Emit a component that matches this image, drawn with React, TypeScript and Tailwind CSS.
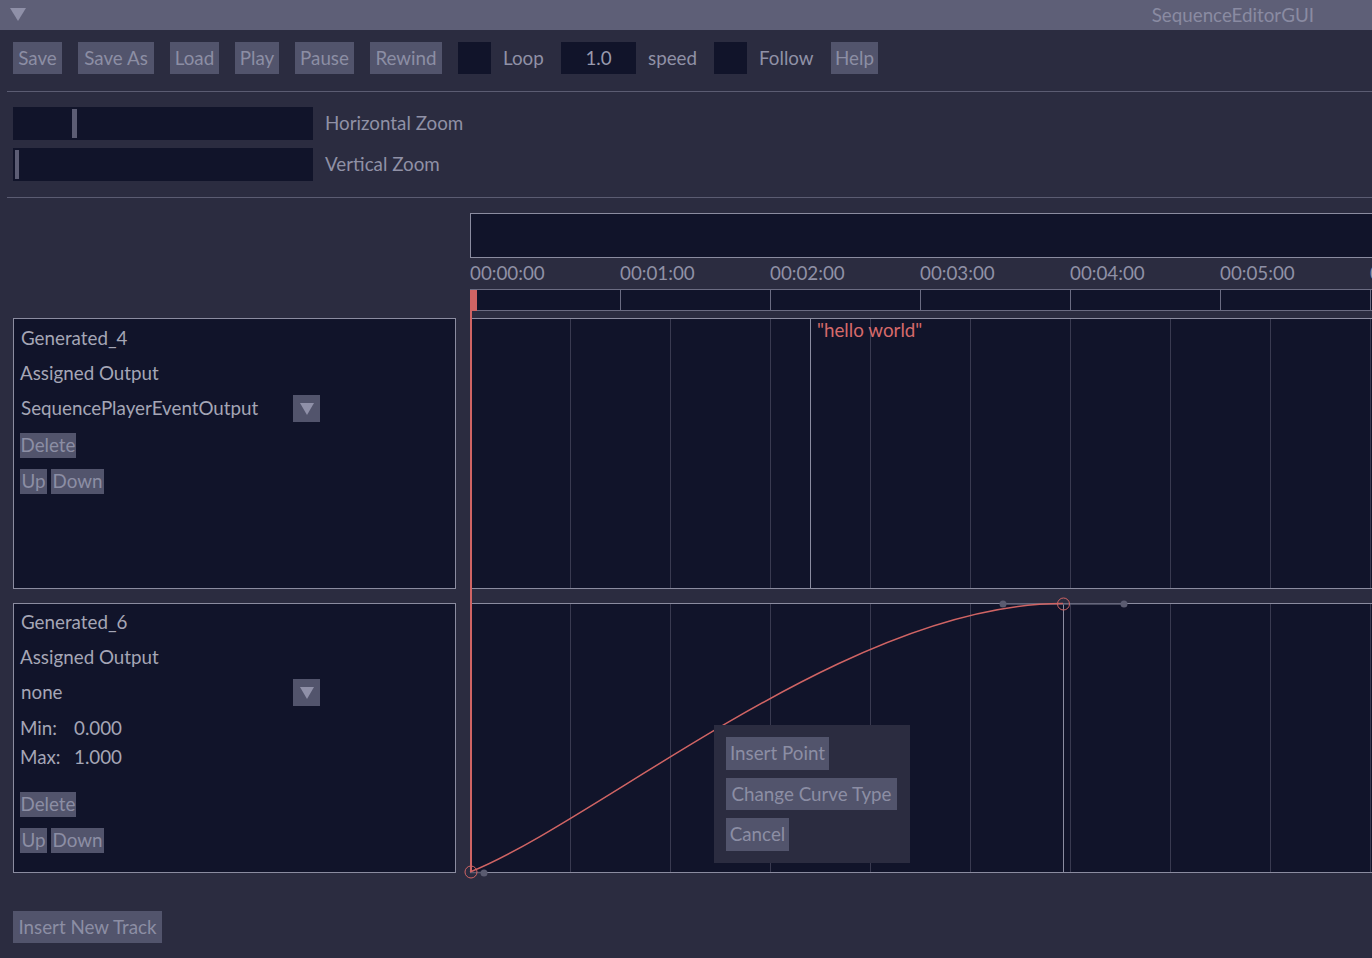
import React from "react";

const RED = "#d06464";
const LIGHT = "#8b8ca0";
const GRID = "#393a50";
const DARK = "#11142a";

function ToolBtn({ children, w, className = "" }: { children: React.ReactNode; w: string; className?: string }) {
  return (
    <div className={`h-[32px] ${w} bg-[#52546c] text-[#8c8ea4] flex items-center justify-center whitespace-nowrap shrink-0 ${className}`}>
      {children}
    </div>
  );
}

function SmallBtn({ children, w, className = "" }: { children: React.ReactNode; w: string; className?: string }) {
  return (
    <div className={`h-[25px] ${w} bg-[#52546c] text-[#8c8ea4] flex items-center justify-center whitespace-nowrap shrink-0 ${className}`}>
      {children}
    </div>
  );
}

function Check({ className = "" }: { className?: string }) {
  return <div className={`h-[32px] w-[33px] bg-[#11142a] shrink-0 ${className}`} />;
}

function DropArrow() {
  return (
    <div className="w-[27px] h-[27px] bg-[#52546c] flex items-center justify-center shrink-0">
      <svg width="16" height="14" viewBox="0 0 16 14">
        <polygon points="1,1 15,1 8,13" fill="#8f90a8" />
      </svg>
    </div>
  );
}

function Grid({ h }: { h: number }) {
  const xs = [100, 200, 300, 400, 500, 600, 700, 800, 900];
  return (
    <>
      <rect x="0" y="0" width="902" height={h} fill={DARK} />
      {xs.map((x) => (
        <line key={x} x1={x + 0.5} y1="0" x2={x + 0.5} y2={h} stroke={GRID} strokeWidth="1" />
      ))}
    </>
  );
}

export default function App() {
  const labels = ["00:00:00", "00:01:00", "00:02:00", "00:03:00", "00:04:00", "00:05:00", "00:06:00"];
  return (
    <div className="relative w-[1372px] h-[958px] overflow-hidden bg-[#2b2c40] font-[family-name:Lato,'Noto_Sans',sans-serif] text-[18.8px] leading-none text-[#9091a6]">
      {/* title bar */}
      <div className="h-[30px] bg-[#5e5f77] flex items-center justify-between pl-[10px] pr-[58px]">
        <svg width="16" height="14" viewBox="0 0 16 14">
          <polygon points="0,0 16,0 8,13" fill="#8f90a8" />
        </svg>
        <span className="text-[#8a8ba2]">SequenceEditorGUI</span>
      </div>

      {/* toolbar */}
      <div className="flex items-center h-[32px] mt-[12px] pl-[13px]">
        <ToolBtn w="w-[49px]">Save</ToolBtn>
        <ToolBtn w="w-[76px]" className="ml-[16px]">Save As</ToolBtn>
        <ToolBtn w="w-[49px]" className="ml-[16px]">Load</ToolBtn>
        <ToolBtn w="w-[44px]" className="ml-[16px]">Play</ToolBtn>
        <ToolBtn w="w-[59px]" className="ml-[16px]">Pause</ToolBtn>
        <ToolBtn w="w-[72px]" className="ml-[16px]">Rewind</ToolBtn>
        <Check className="ml-[16px]" />
        <span className="ml-[12px] w-[46px] shrink-0">Loop</span>
        <div className="ml-[12px] w-[75px] h-[32px] bg-[#11142a] text-[#9899ad] flex items-center justify-center shrink-0">1.0</div>
        <span className="ml-[12px] w-[54px] shrink-0">speed</span>
        <Check className="ml-[12px]" />
        <span className="ml-[12px] w-[60px] shrink-0">Follow</span>
        <ToolBtn w="w-[47px]" className="ml-[12px]">Help</ToolBtn>
      </div>

      <div className="mt-[17px] ml-[7px] h-px bg-[#5b5c72]" />

      {/* zoom sliders */}
      <div className="pl-[13px] pt-[15px] flex flex-col gap-[8px]">
        <div className="flex items-center">
          <div className="w-[300px] h-[33px] bg-[#11142a] flex items-center pl-[59px] shrink-0">
            <div className="w-[5px] h-[29px] bg-[#5c5d74]" />
          </div>
          <span className="ml-[12px]">Horizontal Zoom</span>
        </div>
        <div className="flex items-center">
          <div className="w-[300px] h-[33px] bg-[#11142a] flex items-center pl-[2px] shrink-0">
            <div className="w-[4px] h-[29px] bg-[#5c5d74]" />
          </div>
          <span className="ml-[12px]">Vertical Zoom</span>
        </div>
      </div>

      <div className="mt-[16px] ml-[7px] h-px bg-[#5b5c72]" />

      {/* timeline */}
      <div className="flex pl-[13px] mt-[15px]">
        {/* left column: track headers */}
        <div className="w-[443px] shrink-0 flex flex-col text-[#a5a6b6]">
          <div className="h-[105px]" />
          {/* track 1 */}
          <div className="h-[271px] border border-[#8b8ca0] bg-[#11142a] pl-[6px] pt-[2px] flex flex-col">
            <div className="h-[35px] flex items-center pl-[1px]">Generated_4</div>
            <div className="h-[35px] flex items-center">Assigned Output</div>
            <div className="h-[35px] flex items-center">
              <span className="w-[273px] pl-[1px] shrink-0">SequencePlayerEventOutput</span>
              <DropArrow />
            </div>
            <SmallBtn w="w-[56px]" className="mt-[7px]">Delete</SmallBtn>
            <div className="flex gap-[4px] mt-[11px]">
              <SmallBtn w="w-[27px]">Up</SmallBtn>
              <SmallBtn w="w-[53px]">Down</SmallBtn>
            </div>
          </div>
          {/* track 2 */}
          <div className="mt-[14px] h-[270px] border border-[#8b8ca0] bg-[#11142a] pl-[6px] pt-[1px] flex flex-col">
            <div className="h-[35px] flex items-center pl-[1px]">Generated_6</div>
            <div className="h-[35px] flex items-center">Assigned Output</div>
            <div className="h-[35px] flex items-center">
              <span className="w-[273px] pl-[1px] shrink-0">none</span>
              <DropArrow />
            </div>
            <div className="mt-[4px] h-[28px] flex items-center">
              <span className="w-[54px] shrink-0">Min:</span>
              <span>0.000</span>
            </div>
            <div className="h-[30px] flex items-center">
              <span className="w-[54px] shrink-0">Max:</span>
              <span>1.000</span>
            </div>
            <SmallBtn w="w-[56px]" className="mt-[20px]">Delete</SmallBtn>
            <div className="flex gap-[4px] mt-[11px]">
              <SmallBtn w="w-[27px]">Up</SmallBtn>
              <SmallBtn w="w-[53px]">Down</SmallBtn>
            </div>
          </div>
          <ToolBtn w="w-[149px]" className="mt-[38px]">Insert New Track</ToolBtn>
        </div>

        {/* right column: timeline */}
        <div className="ml-[14px] relative w-[902px] shrink-0 flex flex-col">
          <div className="h-[45px] border-y border-l border-[#8b8ca0] bg-[#11142a]" />
          <div className="h-[31px] flex items-center">
            {labels.map((l) => (
              <span key={l} className="w-[150px] shrink-0 whitespace-nowrap">{l}</span>
            ))}
          </div>
          <div className="h-[22px] border-y border-[#6b6c82] bg-[#11142a] flex">
            {labels.map((l) => (
              <div key={l} className="w-[150px] h-full border-l border-[#6b6c82] shrink-0" />
            ))}
          </div>

          {/* track 1 lane */}
          <div className="relative mt-[7px] h-[271px]">
            <svg width="902" height="271" className="block">
              <Grid h={271} />
              <line x1="340.5" y1="0" x2="340.5" y2="271" stroke={LIGHT} strokeWidth="1" />
              <line x1="0" y1="0.5" x2="902" y2="0.5" stroke={LIGHT} strokeWidth="1" />
              <line x1="0" y1="270.5" x2="902" y2="270.5" stroke={LIGHT} strokeWidth="1" />
            </svg>
            <span className="absolute left-[347px] top-[3px] text-[#d66a6a] whitespace-nowrap">"hello world"</span>
          </div>

          {/* track 2 lane */}
          <div className="relative mt-[14px] h-[270px]">
            <svg width="902" height="270" className="block overflow-visible">
              <Grid h={270} />
              <line x1="593.5" y1="0" x2="593.5" y2="270" stroke={LIGHT} strokeWidth="1" />
              <line x1="0" y1="0.5" x2="902" y2="0.5" stroke={LIGHT} strokeWidth="1" />
              <line x1="0" y1="269.5" x2="902" y2="269.5" stroke={LIGHT} strokeWidth="1" />
              <line x1="533" y1="1" x2="654" y2="1" stroke="#5a5b70" strokeWidth="1.5" />
              <circle cx="533" cy="1" r="3.5" fill="#5a5b70" />
              <circle cx="654" cy="1" r="3.5" fill="#5a5b70" />
              <line x1="0" y1="269.5" x2="14" y2="269.5" stroke="#5a5b70" strokeWidth="1.5" />
              <circle cx="14" cy="270" r="3.5" fill="#5a5b70" />
              <path d="M0 269 C130 217, 380 0, 593 0.5" fill="none" stroke={RED} strokeWidth="1.5" />
              <circle cx="593.5" cy="1" r="6" fill="none" stroke={RED} strokeWidth="1" />
              <circle cx="1" cy="269" r="6" fill="none" stroke={RED} strokeWidth="1" />
            </svg>

            {/* context menu */}
            <div className="absolute left-[244px] top-[122px] w-[196px] h-[138px] bg-[#2b2c40] p-[12px] flex flex-col gap-[8px]">
              <div className="h-[33px] w-[103px] bg-[#52546c] text-[#8c8ea4] flex items-center justify-center whitespace-nowrap">Insert Point</div>
              <div className="h-[33px] w-[171px] bg-[#52546c] text-[#8c8ea4] flex items-center justify-center whitespace-nowrap">Change Curve Type</div>
              <div className="h-[33px] w-[63px] bg-[#52546c] text-[#8c8ea4] flex items-center justify-center whitespace-nowrap">Cancel</div>
            </div>
          </div>

          {/* playhead */}
          <div className="absolute left-0 top-[77px] w-[7px] h-[21px] bg-[#d06464]" />
          <div className="absolute left-0 top-[77px] w-[2px] h-[582px] bg-[#d06464]" />
        </div>
      </div>
    </div>
  );
}
